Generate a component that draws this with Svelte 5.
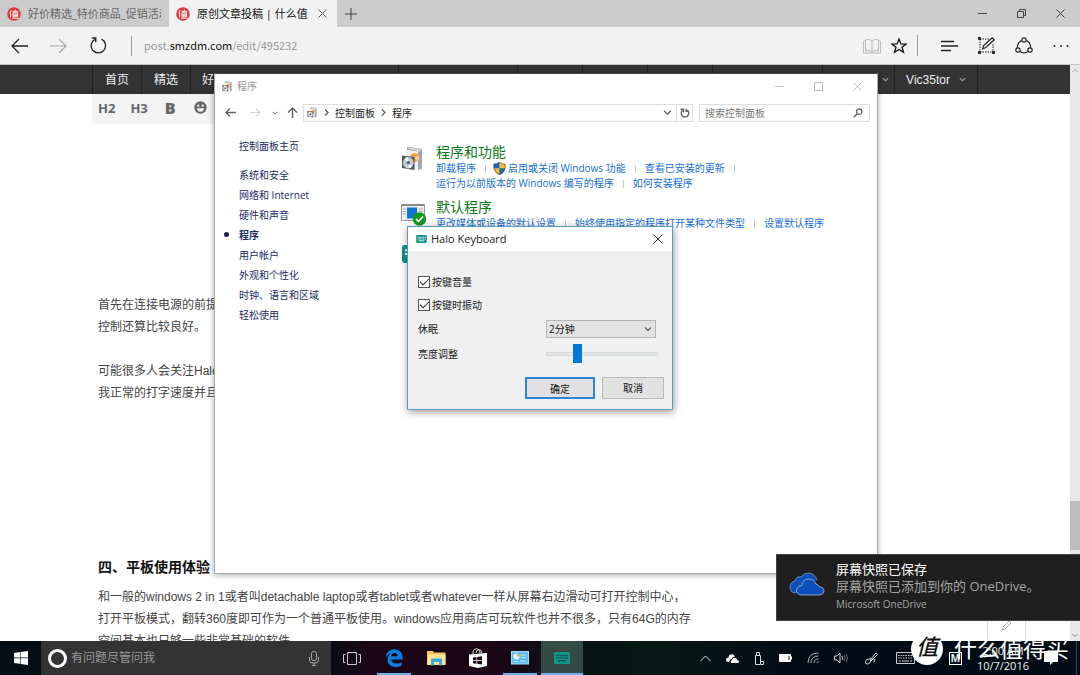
<script>
  const sideLinks = ['系统和安全', '网络和 Internet', '硬件和声音', '程序', '用户帐户', '外观和个性化', '时钟、语言和区域', '轻松使用'];
  let clickSound = $state(true);
  let clickVibrate = $state(true);
  let brightness = $state(26);
</script>

{#snippet brand()}
  <svg class="brand" width="14" height="14" viewBox="0 0 14 14" aria-hidden="true">
    <circle cx="7" cy="7" r="6.8" fill="#dd3b3b" />
    <path d="M4.3 3 2.6 6.4M3.6 5.5v5M5.4 4.4h6M8.3 2.6v2M6 5.8h4.6v4H6zM6 7.2h4.6M6 8.6h4.6M5 11.2h6.6" stroke="#fff" stroke-width=".9" fill="none" />
  </svg>
{/snippet}

{#snippet box(size)}
  <svg width={size} height={size} viewBox="0 0 24 24" aria-hidden="true">
    <path d="M6 0h3l12 2v3L6 3z" fill="#a9adb0" />
    <path d="M5 3 17 5v17L5 20z" fill="#eef0f1" />
    <path d="m17 5 4-1v18l-4 1z" fill="#a3a7aa" />
    <path d="m6 1 1.500-.5L20 2.500 17 4z" fill="#dfe2e3" />
    <circle cx="13.500" cy="10.500" r="4.500" fill="#f2a547" />
    <path d="M13.500 10.500 18 9a4.500 4.500 0 0 1-2 5z" fill="#f7cf9c" />
    <path d="M1 8.500 13.500 10v13L1 21z" fill="#54595d" />
    <ellipse cx="7.300" cy="15.800" rx="5.300" ry="5.700" fill="#c3ccd0" />
    <path d="M7.300 15.800 3.500 12q1.500-2 3.500-2zM7.300 15.800l4 3.500q-1.500 2-3.500 2z" fill="#fff" />
    <circle cx="7.300" cy="15.800" r="1.800" fill="#5c666b" />
  </svg>
{/snippet}

{#snippet keys(w, h)}
  <svg width={w} height={h} viewBox="0 0 16 12" aria-hidden="true">
    <rect width="16" height="12" rx="1.500" fill="#159588" />
    <path d="M2 3.500h12M2 6h12" stroke="currentColor" stroke-width="1.300" stroke-dasharray="1.400 .7" />
    <path d="M4 8.700h8" stroke="currentColor" stroke-width="1.300" />
  </svg>
{/snippet}

{#snippet chevron(w)}
  <svg width={w} height={w} viewBox="0 0 8 8" fill="none" stroke="currentColor" stroke-width="1.300" aria-hidden="true"><path d="m1 2.500 3 3 3-3" /></svg>
{/snippet}

<div class="desktop">
  <section class="browser" aria-label="Microsoft Edge">
    <header class="tabs">
      <button class="tab">{@render brand()}<span>好价精选_特价商品_促销活动</span></button>
      <div class="tab current">
        {@render brand()}<span>原创文章投稿 | 什么值得买</span>
        <button class="plain" aria-label="关闭标签页"><svg width="9" height="9" viewBox="0 0 9 9" stroke="#555" fill="none"><path d="m.5.5 8 8m0-8-8 8" /></svg></button>
      </div>
      <button class="plain plus" aria-label="新建标签页"><svg width="12" height="12" viewBox="0 0 12 12" stroke="#444" fill="none"><path d="M6 0v12M0 6h12" /></svg></button>
      <div class="winctl">
        <button class="plain" aria-label="最小化"><svg width="9" height="9" viewBox="0 0 9 9" stroke="#444"><path d="M0 4.500h9" /></svg></button>
        <button class="plain" aria-label="还原"><svg width="9" height="9" viewBox="0 0 9 9" stroke="#444" fill="none"><path d="M.5 2.500h6v6h-6zM2.500 2.500v-2h6v6h-2" /></svg></button>
        <button class="plain" aria-label="关闭"><svg width="9" height="9" viewBox="0 0 9 9" stroke="#444"><path d="m.5.5 8 8m0-8-8 8" /></svg></button>
      </div>
    </header>

    <div class="toolbar">
      <button class="plain tool back" aria-label="后退"><svg width="17" height="16" viewBox="0 0 17 16" stroke="#222" stroke-width="1.300" fill="none"><path d="M17 8H1M8 1 1 8l7 7" /></svg></button>
      <button class="plain tool" aria-label="前进"><svg width="17" height="16" viewBox="0 0 17 16" stroke="#a6a6a6" stroke-width="1.200" fill="none"><path d="M0 8h16M9 1l7 7-7 7" /></svg></button>
      <button class="plain tool" aria-label="刷新"><svg width="17" height="17" viewBox="0 0 17 17" stroke="#222" stroke-width="1.300" fill="none"><path d="M11.500 2.200A7.200 7.200 0 1 1 5 2.300M1.800 1h4v4.200" /></svg></button>
      <div class="url"><span>post.</span><b>smzdm.com</b><span>/edit/495232</span></div>
      <div class="actions">
        <button class="plain" aria-label="阅读视图"><svg width="18" height="16" viewBox="0 0 18 16" stroke="#bbb" fill="none"><path d="M9 3v12M9 3Q6 0 2.500 2v11Q6 11.500 9 14q3-2.500 6.500-1V2Q12 0 9 3M2.500 3H.5v12h17V3h-2" /></svg></button>
        <button class="plain star" aria-label="收藏"><svg width="16" height="16" viewBox="0 0 16 16" stroke="#111" stroke-width="1.300" fill="none"><path d="m8 1 1.900 4.900 5.200.2-4.100 3.200 1.500 5L8 11.400l-4.500 2.900 1.500-5L.9 6.100l5.200-.2z" /></svg></button>
        <i></i>
        <button class="plain" aria-label="中心"><svg width="17" height="12" viewBox="0 0 17 12" stroke="#222" stroke-width="1.300"><path d="M0 1.500h13M0 6h17M0 10.500h10" /></svg></button>
        <button class="plain" aria-label="做笔记"><svg width="17" height="17" viewBox="0 0 17 17" stroke="#222" fill="none"><path d="M2 2h9M2 2v12M2 15h13M15 7v7" stroke-dasharray="1.500 1" /><path d="M.5.5h2v2h-2zM.5 14.500h2v2h-2zM14.500 14.500h2v2h-2z" fill="#222" /><path d="m5.500 8.800 8.700-8 2 2-8.700 8-2.700.8zM5 11.500l-.8.800" stroke-width="1.200" /></svg></button>
        <button class="plain" aria-label="共享"><svg width="18" height="17" viewBox="0 0 18 17" stroke="#222" stroke-width="1.200" fill="none"><circle cx="9" cy="3" r="2.200" /><circle cx="3" cy="13" r="2.200" /><circle cx="15" cy="13" r="2.200" /><path d="M6.800 3.500Q2 6 2.400 10.700M11.200 3.500Q16 6 15.600 10.700M5.200 14.500Q9 17.500 12.800 14.500" /></svg></button>
        <button class="plain" aria-label="更多"><svg width="16" height="4" viewBox="0 0 16 4" fill="#222"><circle cx="1.500" cy="2" r="1" /><circle cx="8" cy="2" r="1" /><circle cx="14.500" cy="2" r="1" /></svg></button>
      </div>
    </div>

    <div class="viewport">
      <div class="page">
        <nav class="sitenav">
          <div class="inner">
            <a href="#home">首页</a><a href="#pick">精选</a><a class="wide" href="#good">好</a>
            <span class="cell mid"></span><span class="cell"></span><span class="cell"></span><span class="cell"></span><span class="cell fill"></span>
            <span class="cell drop">{@render chevron(7)}</span>
            <a class="user" href="#user">Vic35tor {@render chevron(7)}</a>
          </div>
        </nav>
        <div class="inner doc">
          <div class="format">
            <button class="plain">H2</button><button class="plain">H3</button><button class="plain bold">B</button>
            <button class="plain" aria-label="表情"><svg width="13" height="13" viewBox="0 0 13 13"><circle cx="6.500" cy="6.500" r="6.200" fill="#666" /><circle cx="4.300" cy="4.700" r="1.100" fill="#f3f3f3" /><circle cx="8.700" cy="4.700" r="1.100" fill="#f3f3f3" /><path d="M2.800 7.300h7.400Q9.500 10.800 6.500 10.800T2.800 7.300" fill="#f3f3f3" /></svg></button>
          </div>
          <article>
            <div class="space first"></div>
            <p>首先在连接电源的前提<br />控制还算比较良好。</p>
            <p>可能很多人会关注Halo<br />我正常的打字速度并且</p>
            <div class="space second"></div>
            <h2>四、平板使用体验</h2>
            <p>和一般的windows 2 in 1或者叫detachable laptop或者tablet或者whatever一样从屏幕右边滑动可打开控制中心，<br />打开平板模式，翻转360度即可作为一个普通平板使用。windows应用商店可玩软件也并不很多，只有64G的内存<br />空间基本也只够一些非常基础的软件</p>
          </article>
        </div>
        <button class="plain compose" aria-label="编辑"><svg width="12" height="12" viewBox="0 0 12 12" fill="none" stroke="#aaa"><path d="m1 11 1-3 6-6 2 2-6 6z" /></svg></button>
      </div>
      <div class="scroll">
        <svg width="8" height="8" viewBox="0 0 8 8" fill="none" stroke="#aaa"><path d="m1.500 5 2.500-2.500L6.500 5" /></svg>
        <div class="thumb"></div>
        <svg width="8" height="8" viewBox="0 0 8 8" fill="none" stroke="#888"><path d="m1.500 3 2.500 2.500L6.500 3" /></svg>
      </div>
    </div>
  </section>

  <section class="panel" aria-label="程序">
    <header class="ptitle">
      {@render box(11)}<span>程序</span>
      <div class="winctl pale">
        <button class="plain" aria-label="最小化"><svg width="9" height="9" viewBox="0 0 9 9" stroke="#bbb"><path d="M0 4.500h9" /></svg></button>
        <button class="plain" aria-label="最大化"><svg width="9" height="9" viewBox="0 0 9 9" stroke="#bbb" fill="none"><path d="M.5.5h8v8h-8z" /></svg></button>
        <button class="plain" aria-label="关闭"><svg width="9" height="9" viewBox="0 0 9 9" stroke="#bbb"><path d="m.5.5 8 8m0-8-8 8" /></svg></button>
      </div>
    </header>
    <div class="addr">
      <button class="plain" aria-label="后退"><svg width="11" height="9" viewBox="0 0 11 9" stroke="#666" stroke-width="1.400" fill="none"><path d="M11 4.500H1M5 .5l-4 4 4 4" /></svg></button>
      <button class="plain fwd" aria-label="前进"><svg width="11" height="9" viewBox="0 0 11 9" stroke="#d5d5d5" stroke-width="1.200" fill="none"><path d="M0 4.500h10M6 .5l4 4-4 4" /></svg></button>
      <button class="plain hist" aria-label="历史">{@render chevron(6)}</button>
      <button class="plain" aria-label="上移"><svg width="11" height="11" viewBox="0 0 11 11" stroke="#666" stroke-width="1.500" fill="none"><path d="M5.500 11V1M1 5.500l4.500-4.500L10 5.500" /></svg></button>
      <div class="crumbs">
        {@render box(11)}
        <svg class="sep" width="5" height="7" viewBox="0 0 5 7" fill="none" stroke="#555" stroke-width="1.200"><path d="m1 .5 3 3-3 3" /></svg>
        <a href="#panel">控制面板</a>
        <svg class="sep" width="5" height="7" viewBox="0 0 5 7" fill="none" stroke="#555" stroke-width="1.200"><path d="m1 .5 3 3-3 3" /></svg>
        <a href="#programs">程序</a>
        <button class="plain open" aria-label="展开">{@render chevron(9)}</button>
        <button class="plain reload" aria-label="刷新"><svg width="10" height="10" viewBox="0 0 10 10" fill="none" stroke="#666" stroke-width="1.400"><path d="M7.200 2A3.800 3.800 0 1 1 2.500 2.300M.5 1.200h3v3M6 .8v2.500h2.500" /></svg></button>
      </div>
      <label class="find"><input type="text" placeholder="搜索控制面板" aria-label="搜索控制面板" /><svg width="10" height="10" viewBox="0 0 10 10" fill="none" stroke="#666"><circle cx="6.200" cy="3.700" r="2.700" stroke-width="1.400" /><path d="M4.200 5.700.7 9.300" stroke-width="1.500" /></svg></label>
    </div>
    <div class="pbody">
      <aside>
        <a class="home" href="#panel">控制面板主页</a>
        {#each sideLinks as item}
          <a href="#side" class:on={item === '程序'}>{item}</a>
        {/each}
      </aside>
      <main>
        <div class="cat">
          <div class="pic">{@render box(24)}</div>
          <div>
            <h3>程序和功能</h3>
            <div class="links"><a href="#l">卸载程序</a><a class="shielded" href="#l"><svg width="13" height="13" viewBox="0 0 13 13" aria-hidden="true"><path d="M6.500 0Q9 1.800 12.500 1.800V6Q12 10.500 6.500 13Z" fill="#f6bd2b" /><path d="M6.500 0Q4 1.800.5 1.800V6Q1 10.500 6.500 13Z" fill="#1c66c5" /><path d="M.6 6.200h5.900V13Q1.500 11 .6 6.200" fill="#f6bd2b" /><path d="M12.400 6.200H6.500V13Q11.500 11 12.400 6.200" fill="#1c66c5" /><path d="M6.500 .5Q9 2.200 12 2.200V6Q11.500 10 6.500 12.400Q1.500 10 1 6V2.200Q4 2.200 6.500 .5" fill="none" stroke="#445" stroke-width=".5" /></svg>启用或关闭 Windows 功能</a><a href="#l">查看已安装的更新</a><span></span></div>
            <div class="links"><a href="#l">运行为以前版本的 Windows 编写的程序</a><a href="#l">如何安装程序</a></div>
          </div>
        </div>
        <div class="cat">
          <div class="pic"><svg width="26" height="24" viewBox="0 0 26 24" aria-hidden="true"><path d="M.5 2.500h23v16H.5z" fill="#eee" stroke="#999" /><path d="M1 3h22" stroke="#888" stroke-width="2" /><path d="M2 7h3M2 9.500h3M2 12h3M18 7h4M18 9.500h4" stroke="#aaa" /><path d="M6 5.500h10v11H6z" fill="#0f77d7" /><circle cx="18.500" cy="17" r="6.700" fill="#109a1c" /><path d="m15 17 2.500 2.500 4.500-5" fill="none" stroke="#fff" stroke-width="1.800" /></svg></div>
          <div>
            <h3>默认程序</h3>
            <div class="links"><a href="#l">更改媒体或设备的默认设置</a><a href="#l">始终使用指定的程序打开某种文件类型</a><a href="#l">设置默认程序</a></div>
          </div>
        </div>
        <div class="cat third"><div class="pic kb">{@render keys(24, 18)}</div></div>
      </main>
    </div>
  </section>

  <form class="dialog" aria-label="Halo Keyboard">
    <header>{@render keys(11, 8)}<span>Halo Keyboard</span>
      <button type="button" class="plain" aria-label="关闭"><svg width="10" height="10" viewBox="0 0 10 10" stroke="#444"><path d="m.5.5 9 9m0-9-9 9" /></svg></button>
    </header>
    <div class="fields">
      <label class="tick"><input type="checkbox" bind:checked={clickSound} />按键音量</label>
      <label class="tick"><input type="checkbox" bind:checked={clickVibrate} />按键时振动</label>
      <div class="field"><label for="sleep">休眠</label><div class="select"><select id="sleep"><option>2分钟</option></select>{@render chevron(8)}</div></div>
      <div class="field"><label for="bright">亮度调整</label><input id="bright" type="range" min="0" max="100" bind:value={brightness} /></div>
      <div class="buttons"><button type="button" class="ok">确定</button><button type="button">取消</button></div>
    </div>
  </form>

  <aside class="toast">
    <svg width="36" height="24" viewBox="0 0 36 24" aria-hidden="true"><path d="M7 21Q1 21 1 15q0-5 5-6 1-5 6-4 3-4 8-4 6 1 8 7" fill="#0b4fb8" stroke="#8fa9c9" stroke-width=".7" /><path d="M12 23q-5-1-4.500-5 .5-4 5-4.500Q14 7 20 7q5 0 7 5 2 0 3 2.500 5 .5 5 4.500 0 3-4 4z" fill="#0b4fb8" stroke="#a8bbd2" stroke-width=".8" /></svg>
    <div><strong>屏幕快照已保存</strong><p>屏幕快照已添加到你的 OneDrive。</p><small>Microsoft OneDrive</small></div>
  </aside>

  <footer class="taskbar">
    <button class="plain start" aria-label="开始"><svg width="14" height="14" viewBox="0 0 14 14" fill="#fff"><path d="M0 2l6-.9v5.500H0zM6.600 1 14 0v6.600H6.600zM0 7.200h6v5.500L0 11.900zM6.600 7.200H14V14l-7.400-1z" /></svg></button>
    <label class="ask"><i></i><input type="text" placeholder="有问题尽管问我" aria-label="有问题尽管问我" /><svg width="10" height="15" viewBox="0 0 10 15" fill="none" stroke="#aaa"><rect x="2.500" y=".5" width="5" height="9" rx="2" /><path d="M.5 6v3.500Q.5 12 5 12t4.500-2.500V6M5 12v2.500M3 14.500h4" /></svg></label>
    <div class="apps">
      <button class="plain" aria-label="任务视图"><svg width="18" height="13" viewBox="0 0 18 13" fill="none" stroke="#ccc"><path d="M4.500.5h9v12h-9zM2.500 2.500h-2v8h2M15.500 2.500h2v8h-2" /></svg></button>
      <button class="plain run" aria-label="Edge"><svg width="18" height="18" viewBox="0 0 18 18"><path d="M.8 8.200C1.500 3.300 4.800.3 9.300.3c5.300 0 8.200 3.600 8.200 8.200v2H6.200c.2 2.700 2.500 4 5.300 4 1.900 0 3.600-.5 5-1.300v3.500c-1.600.8-3.600 1.200-5.700 1.200-5 0-8.300-2.700-8.300-7.300 0-2.700 1.400-4.900 3.900-6.300C3.700 5.100 1.800 6.500.8 8.200zM6.300 7.300h6.300C12.600 5.200 11.600 4 9.500 4S6.500 5.300 6.300 7.300z" fill="#0a7ee0" /></svg></button>
      <button class="plain" aria-label="资源管理器"><svg width="19" height="16" viewBox="0 0 19 16"><path d="M0 1h6l1 1.500h11.500V14H0z" fill="#f2c95a" /><path d="M1 4.500h17.500V15H0z" fill="#ffe394" /><path d="M4 15.500V9.500q0-1 1-1h9q1 0 1 1v6h-3V12H7v3.500z" fill="#38aee0" /></svg></button>
      <button class="plain" aria-label="应用商店"><svg width="18" height="20" viewBox="0 0 18 20"><path d="M4 6V3.500Q5 .7 7.500.7T11 4v2M7 5q.5-3.500 3-3.500T13 5" fill="none" stroke="#ddd" /><path d="M0 6.500 18 5v13l-9 2-9-2z" fill="#fff" /><path d="m4 9.500 3.500-.5v3H4zM8.200 8.900 13 8.300V12H8.200zM4 12.700h3.500v3L4 15.200zM8.200 12.700H13v3.700l-4.800-.6z" fill="#1c0a18" /></svg></button>
      <button class="plain run" aria-label="控制面板"><svg width="18" height="14" viewBox="0 0 18 14"><rect x=".5" y=".5" width="17" height="12.500" fill="#61bdf0" stroke="#a6ddf8" /><circle cx="5.500" cy="5.500" r="3" fill="#e9f7ff" /><path d="M5.500 5.500v-3a3 3 0 0 1 3 3z" fill="#f5aa30" /><path d="M10 4h5M10 6.500h5M2.500 10.500h5M9 10h6" stroke="#b9e3fa" /></svg></button>
      <button class="plain run active" aria-label="Halo Keyboard">{@render keys(16, 12)}</button>
    </div>
    <div class="tray">
      <svg width="11" height="7" viewBox="0 0 11 7" fill="none" stroke="#ddd"><path d="m.5 6 5-5 5 5" /></svg>
      <svg width="13" height="9" viewBox="0 0 13 9" fill="#fff"><path d="M3 8Q0 8 0 5.800T2.500 3.500Q3 0 6 .3q2.300.2 3 2.700Q7 2 5.500 5 3.500 5 3.500 7zM5 9Q4 7 6 6q1-3 3.500-2Q11 4.500 11 6q2 .2 2 1.500T11.500 9z" /></svg>
      <svg width="10" height="13" viewBox="0 0 10 13" fill="none" stroke="#ddd"><path d="M1.500 3.500h5v9h-5zM2.500 3.500v-3h3v3M7 9.500h2.500v3H7" /></svg>
      <svg width="13" height="8" viewBox="0 0 13 8"><path d="M.5.5h11v7H.5z" fill="#fff" stroke="#fff" /><path d="M9.500 2h1v4h-1z" fill="#222" /><path d="M12 2.500h1v3h-1z" fill="#fff" /></svg>
      <svg width="12" height="12" viewBox="0 0 12 12" fill="none" stroke="#aaa"><path d="M1 11Q1 1 11.500 1M4 11q0-7 7.500-7M7 11q0-4 4.500-4M10 11q0-1.500 1.500-1.500" /></svg>
      <svg width="14" height="12" viewBox="0 0 14 12" fill="none"><path d="M.5 4h2.500l3-3v10l-3-3H.5z" stroke="#ccc" /><path d="M8 4q1.500 2 0 4" stroke="#ccc" /><path d="M10 3q2.500 3 0 6M12 1.500q3 4.500 0 9" stroke="#667" /></svg>
      <svg class="pen" width="13" height="13" viewBox="0 0 13 13" fill="none" stroke="#ddd"><path d="m5 8 6-7 1.500 1.500L6 9zM6 9q-1 3-3.500 3T.5 9.500 4 7t5 0-.5 3.500" /></svg>
      <svg width="19" height="12" viewBox="0 0 19 12" fill="none" stroke="#ccc"><path d="M.5.5h18v11H.5z" /><path d="M2 3.500h15M2 6h15" stroke-dasharray="1.500 1" /><path d="M3 9h13" stroke-dasharray="2 1 7 1" /></svg>
      <span class="ime">M</span>
      <time>2:00 AM<br />10/7/2016</time>
      <svg class="note" width="14" height="14" viewBox="0 0 14 14" fill="#fff"><path d="M0 0h14v11H9l-3 3v-3H0z" /></svg>
      <i></i>
    </div>
  </footer>

  <div class="mark"><b>值</b><span>什么值得买</span></div>
</div>

<style>
  :global(body) { margin: 0; }
  .desktop {
    --ui: "Open Sans", "Noto Sans CJK SC", sans-serif;
    --web: "Liberation Sans", "Noto Sans CJK SC", sans-serif;
    position: relative; display: flex; flex-direction: column; height: 100vh; overflow: hidden;
    font: 10px/20px var(--ui); color: #111; background: #fff;
  }
  .desktop :global(*) { box-sizing: border-box; }
  svg { flex: none; display: block; }
  a { color: inherit; text-decoration: none; white-space: nowrap; }
  .plain { border: 0; padding: 0; background: none; font: inherit; color: inherit; display: flex; align-items: center; justify-content: center; flex: none; }

  .browser { flex: 1; min-height: 0; display: flex; flex-direction: column; }
  .tabs { display: flex; height: 27px; background: #ccc; font-size: 11px; }
  .tab { display: flex; align-items: center; gap: 7px; width: 169px; padding: 0 8px 0 7px; border: 0; background: none; font: inherit; color: #666; text-align: left; }
  .tab span { flex: 1; overflow: hidden; white-space: nowrap; }
  .tab.current { background: #f2f2f2; color: #111; width: 168px; }
  .tab.current .plain { width: 14px; }
  .plus { width: 28px; }
  .winctl { display: flex; margin-left: auto; }
  .winctl .plain { width: 39px; }

  .toolbar { display: flex; align-items: center; height: 38px; background: #f2f2f2; border-bottom: 1px solid #c4c4c4; padding-right: 11px; }
  .tool { width: 40px; }
  .tool.back { width: 38px; }
  .url { margin-left: 13px; padding: 0 0 2px 12px; border-left: 1px solid #999; font: 11px/18px "Noto Sans CJK SC", sans-serif; color: #999; display: flex; }
  .url b { font-weight: 400; color: #111; }
  .actions { margin-left: auto; display: flex; align-items: center; gap: 20px; }
  .actions .star { margin-left: -10px; }
  .actions i { width: 1px; height: 21px; background: #999; margin: 0 3px 0 -10px; }

  .viewport { flex: 1; min-height: 0; display: flex; }
  .page { position: relative; flex: 1; min-width: 0; overflow: hidden; font-family: var(--web); }
  .inner { width: calc(100% - 184px); max-width: 1180px; margin: 0 auto; }
  .sitenav { background: #333; color: #eee; font-size: 12px; }
  .sitenav .inner { display: flex; height: 29px; border-left: 1px solid #222; border-right: 1px solid #222; }
  .sitenav a, .cell { display: flex; align-items: center; justify-content: center; width: 49px; border-right: 1px solid #242424; }
  .sitenav a.wide { width: 208px; justify-content: flex-start; padding-left: 11px; }
  .cell { width: 65px; }
  .cell.mid { width: 119px; }
  .cell.fill { flex: 1; }
  .cell.drop { width: 72px; justify-content: flex-end; padding-right: 5px; color: #aaa; }
  .sitenav a.user { width: 82px; gap: 9px; border: 0; }
  .user svg { color: #aaa; }
  .format { display: flex; align-items: center; gap: 15px; width: 80%; height: 30px; padding: 0 6px 3px; background: #f3f3f3; font: 700 13px/20px "Open Sans", sans-serif; color: #666; }
  .format .bold { font-size: 16px; font-weight: 800; margin: 0 3px 0 2px; }
  article { padding-left: 6px; font-size: 12px; line-height: 22px; color: #444; }
  article p { margin: 0 0 22px; white-space: nowrap; }
  article h2 { margin: 0 0 8px; font-size: 14px; line-height: 22px; color: #111; }
  .space.first { height: 170px; }
  .space.second { height: 130px; }
  .compose { position: absolute; right: 44px; bottom: -4px; width: 39px; height: 40px; border: 1px solid #ddd; background: #fff; }
  .scroll { width: 10px; background: #e8e8e8; display: flex; flex-direction: column; align-items: center; padding: 2px 0; }
  .thumb { width: 10px; height: 49px; margin: auto 0 81px; background: #bdbdbd; }

  .panel { position: absolute; left: 214px; top: 73px; width: 664px; height: 501px; background: #fff; border: 1px solid #aaa; border-top-color: #444; box-shadow: 0 1px 6px rgb(0 0 0 / 35%); }
  .ptitle { display: flex; align-items: center; gap: 4px; height: 24px; padding-left: 7px; color: #999; }
  .ptitle .winctl { height: 24px; }
  .addr { display: flex; align-items: center; height: 29px; padding: 0 7px 0 10px; color: #666; }
  .fwd { margin-left: 14px; }
  .hist { margin: 0 9px 0 11px; }
  .crumbs { flex: 1; display: flex; align-items: center; height: 18px; margin: 0 6px 0 5px; padding-left: 3px; border: 1px solid #ddd; color: #222; }
  .sep { margin: 0 6px; }
  .open { margin-left: auto; width: 18px; color: #666; }
  .reload { width: 16px; height: 16px; border-left: 1px solid #ddd; }
  .find { display: flex; align-items: center; width: 171px; height: 18px; padding: 0 6px 0 5px; border: 1px solid #ddd; }
  .find input, .ask input { flex: 1; min-width: 0; border: 0; padding: 0; background: none; font: inherit; color: inherit; outline: 0; }
  .find input::placeholder { color: #777; }
  .pbody { display: flex; }
  aside { display: flex; flex-direction: column; }
  .pbody aside { width: 186px; padding: 9px 0 0 24px; color: #1e2a66; }
  .pbody aside a { line-height: 20px; }
  .pbody aside .home { margin-bottom: 9px; }
  .on { font-weight: 700; }
  .on::before { content: ""; display: inline-block; width: 5px; height: 5px; border-radius: 50%; background: #151c5a; margin: 0 10px 2px -15px; }
  main { flex: 1; min-width: 0; padding-top: 16px; }
  .cat { display: flex; margin-bottom: 7px; }
  .cat.third { padding-top: 7px; }
  .pic { width: 35px; padding-top: 4px; color: #fff; }
  .pic.kb { padding: 0 0 0 1px; }
  h3 { margin: 0; font-size: 14px; line-height: 18px; font-weight: 400; color: #0b7a18; }
  .links { display: flex; height: 15px; line-height: 15px; color: #1a6fd0; }
  .links > * { display: flex; align-items: center; }
  .links > * + *::before { content: ""; width: 1px; height: 8px; background: #ccc; margin: 0 9px; }
  .links .shielded::before { margin-right: 7px; }
  .shielded svg { margin-right: 2px; }

  .dialog { position: absolute; left: 407px; top: 226px; width: 266px; background: #f0f0f0; border: 1px solid #5b9bc8; box-shadow: 1px 2px 8px rgb(0 0 0 / 40%); }
  .dialog header { display: flex; align-items: center; gap: 4px; height: 24px; padding: 0 9px 0 8px; background: #fff; color: #fff; font-size: 11px; }
  .dialog header span { color: #222; }
  .dialog header .plain { margin-left: auto; }
  .fields { padding: 19px 8px 10px 10px; color: #222; }
  .tick { display: flex; align-items: center; gap: 2px; height: 23px; }
  .tick input { appearance: none; width: 12px; height: 12px; margin: 0; border: 1px solid #555; background: #fff; display: grid; place-items: center; }
  .tick input:checked::before { content: ""; width: 8px; height: 4px; border: solid #333; border-width: 0 0 1px 1px; transform: rotate(-45deg); margin-bottom: 3px; }
  .field { display: grid; grid-template-columns: 128px 1fr; align-items: center; height: 25px; }
  .select { display: flex; align-items: center; width: 110px; color: #666; }
  .select select { appearance: none; width: 100%; height: 18px; padding: 0 2px; margin: 0; border: 1px solid #b5b5b5; border-radius: 0; background: #e3e3e3; font: inherit; line-height: 16px; color: #111; }
  .select svg { margin-left: -12px; pointer-events: none; }
  input[type="range"] { appearance: none; width: 112px; height: 20px; margin: 0; background: none; }
  input[type="range"]::-webkit-slider-runnable-track { height: 4px; background: #e2e6e6; border: 1px solid #d5d9d9; }
  input[type="range"]::-webkit-slider-thumb { appearance: none; width: 9px; height: 19px; margin-top: -9px; background: #0078d7; }
  .buttons { display: flex; justify-content: flex-end; gap: 7px; margin-top: 11px; }
  .buttons button { width: 62px; height: 22px; padding: 0; border: 1px solid #b8b8b8; background: #e1e1e1; font: inherit; color: #111; }
  .buttons .ok { width: 70px; border: 2px solid #2a86d8; }

  .toast { position: absolute; right: 0; bottom: 54px; width: 304px; height: 67px; flex-direction: row; gap: 11px; padding: 6px 0 0 12px; background: #1f1f1f; border: 1px solid #444; border-right: 0; color: #a5a5a5; font-size: 13px; line-height: 17px; }
  .toast svg { margin-top: 11px; }
  .toast strong { display: block; font-weight: 400; color: #fff; }
  .toast p { margin: 0; white-space: nowrap; }
  .toast small { display: block; font-size: 10px; line-height: 18px; }

  .taskbar { display: flex; height: 34px; background: linear-gradient(90deg, #030d15 0 30%, #1b0617 34% 46%, #061513 54%, #071713 62%, #020c17 72%); color: #eee; }
  .start { width: 41px; }
  .ask { display: flex; align-items: center; gap: 4px; width: 290px; padding: 0 12px 0 7px; background: #333; font-size: 12px; }
  .ask i { width: 19px; height: 19px; border: 3px solid #fff; border-radius: 50%; }
  .ask input::placeholder { color: #999; }
  .apps { display: flex; }
  .apps .plain { position: relative; width: 42px; }
  .run::after { content: ""; position: absolute; left: 4px; right: 4px; bottom: 0; height: 2px; background: #69b1ee; }
  .apps .active { background: #354945; color: #0c514b; }
  .active::after { left: 0; right: 0; }
  .tray { margin-left: auto; display: flex; align-items: center; gap: 15px; padding-right: 3px; }
  .pen { margin: 0 3px 0 2px; }
  .note { margin-right: 3px; }
  .ime { width: 13px; height: 13px; margin-left: 19px; border: 1px solid #fff; font: 700 11px/11px var(--web); text-align: center; }
  .tray time { font-size: 11px; line-height: 15px; text-align: center; }
  .tray i { width: 1px; height: 34px; background: #3a4650; }

  .mark { position: absolute; right: 11px; bottom: 9px; display: flex; align-items: center; gap: 11px; color: #fff; font: 400 23px/34px var(--web); }
  .mark b { width: 32px; height: 32px; border-radius: 50%; background: #fff; color: #111; font-size: 22px; line-height: 30px; font-weight: 500; font-style: italic; text-align: center; }
</style>
